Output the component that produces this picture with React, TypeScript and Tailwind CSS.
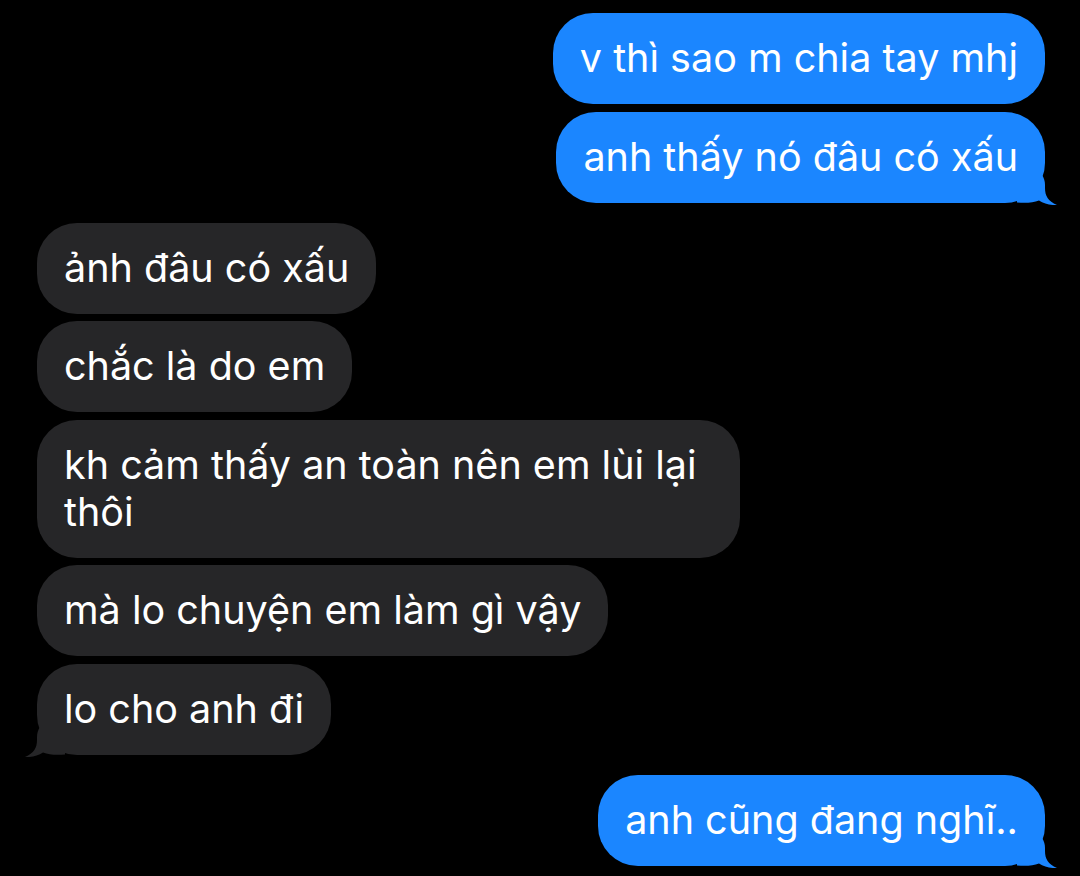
const Tail = ({ side, color }: { side: "left" | "right"; color: string }) => (
  <svg
    width="40"
    height="30"
    viewBox="0 0 40 30"
    className={
      side === "right"
        ? "absolute -right-[12px] -bottom-[2px]"
        : "absolute -left-[12px] -bottom-[2px] -scale-x-100"
    }
  >
    <path
      d="M0 0 H25 C27 3 28 6 28 10 V13 C28 21 31 26 40 30 C33 30.5 27 28.5 22 25.5 C16 28 8 28 0 27.5 Z"
      fill={color}
    />
  </svg>
);

type Msg = { text: string; me: boolean; tail?: boolean; gap?: "group" };

const messages: Msg[] = [
  { text: "v thì sao m chia tay mhj", me: true },
  { text: "anh thấy nó đâu có xấu", me: true, tail: true },
  { text: "ảnh đâu có xấu", me: false, gap: "group" },
  { text: "chắc là do em", me: false },
  { text: "kh cảm thấy an toàn nên em lùi lại thôi", me: false },
  { text: "mà lo chuyện em làm gì vậy", me: false },
  { text: "lo cho anh đi", me: false, tail: true },
  { text: "anh cũng đang nghĩ..", me: true, tail: true, gap: "group" },
];

export default function App() {
  return (
    <div
      className="w-[1080px] h-[876px] bg-black overflow-hidden pt-[13px] pl-[37px] pr-[35px] flex flex-col"
      style={{ fontFamily: "Inter, 'Noto Sans', sans-serif" }}
    >
      {messages.map((m, i) => (
        <div
          key={i}
          className={`flex ${m.me ? "justify-end" : "justify-start"} ${
            i === 0 ? "" : m.gap ? "mt-[20px]" : "mt-[7.5px]"
          }`}
        >
          <div
            className={`relative max-w-[703px] rounded-[40px] px-[27px] py-[22px] text-[39.5px] leading-[47px] text-white font-normal ${
              m.me ? "bg-[#1b86ff]" : "bg-[#262628]"
            }`}
          >
            {m.tail && <Tail side={m.me ? "right" : "left"} color={m.me ? "#1b86ff" : "#262628"} />}
            <span className="relative">{m.text}</span>
          </div>
        </div>
      ))}
    </div>
  );
}
